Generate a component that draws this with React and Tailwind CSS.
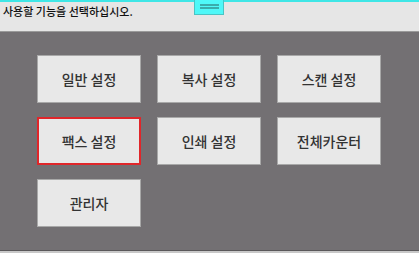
export default function App() {
  const btns = [
    ["일반 설정", false],
    ["복사 설정", false],
    ["스캔 설정", false],
    ["팩스 설정", true],
    ["인쇄 설정", false],
    ["전체카운터", false],
    ["관리자", false],
  ];
  return (
    <div
      className="relative w-[419px] h-[253px] flex flex-col overflow-hidden bg-[#737073]"
      style={{ fontFamily: '"Noto Sans CJK KR", "Noto Sans", sans-serif' }}
    >
      <div className="h-[32px] bg-[#e6e6e6] border-t-2 border-t-[#3fe6e6] border-b border-b-[#9a9a9a] flex items-start">
        <span className="pl-[3px] pt-[2px] text-[11px] leading-[15px] font-medium text-[#111]">
          사용할 기능을 선택하십시오.
        </span>
      </div>
      <div className="absolute left-[194px] top-0 w-[30px] h-[15px] bg-[#4ff8f8] border border-t-0 border-[#4ac4c4] flex flex-col items-center pt-[4px] gap-[1px]">
        <div className="w-[19px] h-[2px] bg-[#3aacac]" />
        <div className="w-[19px] h-[2px] bg-[#3aacac]" />
      </div>
      <div className="flex-1 pl-[37px] pt-[23px]">
        <div className="grid grid-cols-[104px_104px_104px] gap-x-[16px] gap-y-[14px]">
          {btns.map(([label, sel]) => (
            <div
              key={label}
              className={
                "h-[48px] flex items-center justify-center bg-[#e8e8e8] text-[14px] font-medium text-[#333] " +
                (sel ? "border-2 border-[#e0262a]" : "border border-[#a8a8a8]")
              }
            >
              {label}
            </div>
          ))}
        </div>
      </div>
      <div className="h-[3px] border-t border-[#5a585a] bg-[#c8c8c8]" />
    </div>
  );
}
